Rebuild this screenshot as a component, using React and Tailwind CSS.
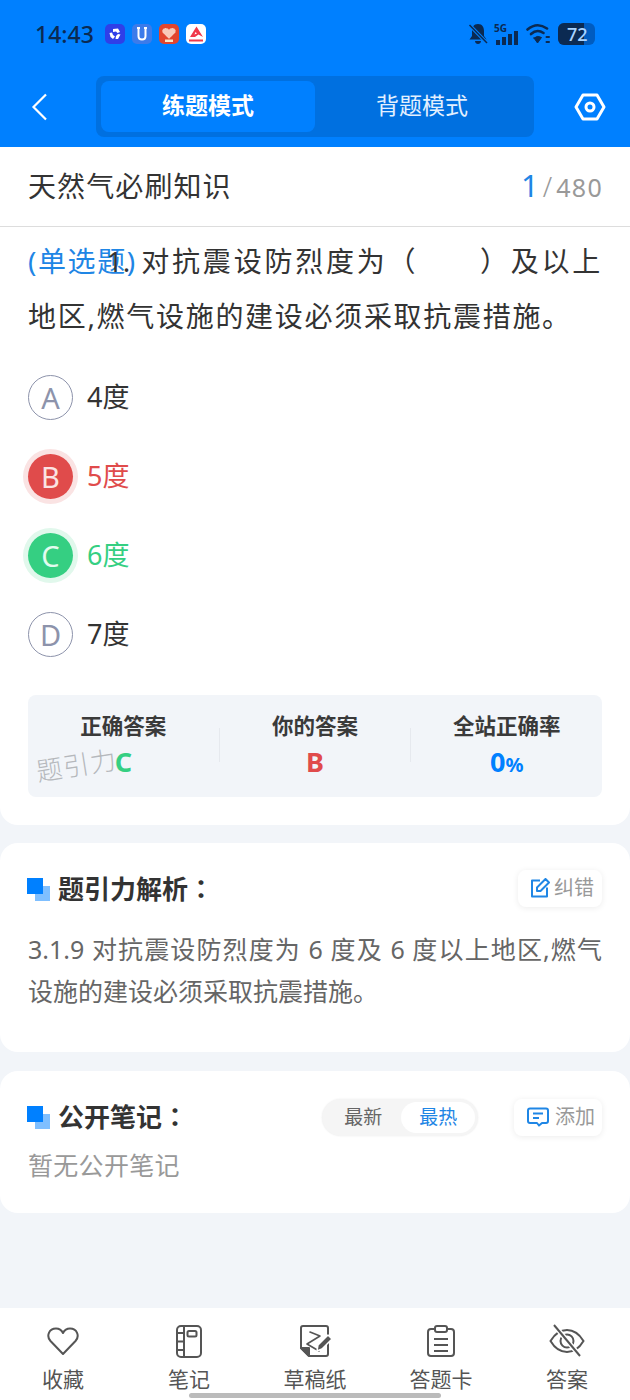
import React from 'react';

const font = { fontFamily: '"Noto Sans", "Noto Sans CJK SC", sans-serif' };

const Option = ({ letter, text, state }) => {
  const circle = {
    red: "bg-[#e04b4b] text-[#fbe3e3] ring-[5px] ring-[#fae3e3]",
    green: "bg-[#35cf82] text-[#e3fbef] ring-[5px] ring-[#e1f8ec]",
    none: "border border-[#8d93ab] text-[#8d93ab]",
  }[state];
  const color = { red: "text-[#e04b4b]", green: "text-[#35cf82]", none: "text-[#333333]" }[state];
  return (
    <div className="flex items-center h-[45px] mb-[34px]">
      <div className={`w-[45px] h-[45px] rounded-full flex items-center justify-center text-[29px] ${circle}`}>{letter}</div>
      <div className={`ml-[14px] text-[27px] ${color}`}>{text}</div>
    </div>
  );
};

const Stat = ({ label, children }) => (
  <div className="flex-1 flex flex-col items-center pt-[18px]">
    <div className="text-[21.5px] leading-[26px] font-bold text-[#3a3a3a]">{label}</div>
    <div className="h-[36px] mt-[5px] flex items-center font-bold text-[27px]">{children}</div>
  </div>
);

const SectionMark = () => (
  <div className="relative w-[23px] h-[23px] shrink-0 ml-[-1px]">
    <div className="absolute right-0 bottom-0 w-[15px] h-[15px] bg-[#7fbfff]" />
    <div className="absolute left-0 top-0 w-[16px] h-[16px] bg-[#0080ff]" />
  </div>
);

const Heart = () => (
  <svg width="34" height="34" viewBox="0 0 34 34" fill="none" stroke="#555" strokeWidth="2">
    <path d="M17 30 L4.5 17 C0 12 3 4.5 10 4.5 C13 4.5 15.5 6 17 9 C18.5 6 21 4.5 24 4.5 C31 4.5 34 12 29.500 17 Z" strokeLinejoin="round" />
  </svg>
);
const Notebook = () => (
  <svg width="34" height="34" viewBox="0 0 34 34" fill="none" stroke="#555" strokeWidth="2">
    <rect x="5" y="2" width="24" height="31" rx="4" />
    <path d="M12 2 V33 M5 9 H12 M5 17.500 H12 M5 26 H12" />
    <rect x="15.500" y="7" width="9" height="5.500" rx="1.500" />
  </svg>
);
const Draft = () => (
  <svg width="34" height="34" viewBox="0 0 34 34" fill="none" stroke="#555" strokeWidth="2" strokeLinejoin="round">
    <path d="M11 32 H28 Q30 32 30 30 V4 Q30 2 28 2 H5 Q3 2 3 4 V24 L11 32" />
    <path d="M3 24 H11 V32 Z" fill="#555" />
    <path d="M12 8 L22 12 L9 20 L21 27" strokeWidth="1.600" fill="none" strokeLinecap="round" />
    <path d="M19 27 L20 21 L30 11 L34 15 L24 25 Z" fill="#555" stroke="#fff" strokeWidth="1.500" />
  </svg>
);
const Clipboard = () => (
  <svg width="34" height="34" viewBox="0 0 34 34" fill="none" stroke="#555" strokeWidth="2">
    <path d="M10 5 H7 Q4 5 4 8 V29 Q4 32 7 32 H27 Q30 32 30 29 V8 Q30 5 27 5 H24" />
    <rect x="11" y="2" width="12" height="6" rx="2" />
    <path d="M10 15 H24 M10 21 H24 M10 27 H24" />
  </svg>
);
const EyeOff = () => (
  <svg width="36" height="34" viewBox="0 0 36 34" fill="none" stroke="#555" strokeWidth="2">
    <path d="M1.500 17 C6 9.500 11.500 6 18 6 C24.500 6 30 9.500 34.500 17 C30 24.500 24.500 28 18 28 C11.500 28 6 24.500 1.500 17 Z" />
    <circle cx="18" cy="17" r="6.500" />
    <path d="M5 1 L31 32" stroke="#fff" strokeWidth="5" />
    <path d="M5 1 L31 32" />
  </svg>
);

const NavItem = ({ icon, label }) => (
  <div className="flex flex-col items-center w-[90px]">
    <div className="h-[34px] flex items-center justify-center">{icon}</div>
    <div className="mt-[7px] text-[21px] leading-[28px] text-[#555555]">{label}</div>
  </div>
);

export default function App() {
  return (
    <div style={font} className="w-[630px] h-[1400px] relative overflow-hidden bg-[#f2f5f9] flex flex-col">
      <header className="bg-[#0080ff] h-[147px] shrink-0">
        <div className="h-[76px] pl-[35px] pr-[35px] pt-[22px] flex items-start justify-between">
          <div className="flex items-center h-[24px]">
            <span className="text-[23px] font-medium text-[#0b2a52] mr-[11px]">14:43</span>
            <div className="flex gap-[7px]">
              <svg width="20" height="20" viewBox="0 0 20 20">
                <rect width="20" height="20" rx="5" fill="#2f3fe8" />
                <path d="M8 5 L13 4.500 L15 8 L12.500 9 L11 7.500 L8 8 Z M4.500 9 L7 8.500 L8 11 L10 12.500 L8 15 L5.500 13 Z M11 12 L13 10 L15.500 10.500 L13 15 L10.500 15 Z" fill="#fff" />
              </svg>
              <svg width="20" height="20" viewBox="0 0 20 20">
                <rect width="20" height="20" rx="5" fill="#3c7bea" />
                <path d="M5 4 H8 M12 4 H15 M6.500 5 V12 Q6.500 15.500 10 15.500 Q13.500 15.500 13.500 12 V5" fill="none" stroke="#fff" strokeWidth="2" />
              </svg>
              <svg width="20" height="20" viewBox="0 0 20 20">
                <rect width="20" height="20" rx="5" fill="#e2452d" />
                <path d="M10 15 L3.500 8.500 C2 5 6.500 2 10 5.500 C13.500 2 18 5 16.500 8.500 Z" fill="#f8c9b8" stroke="#e2452d" strokeWidth="0.500" strokeDasharray="1 1" />
                <rect x="6" y="15.500" width="8" height="2.500" fill="#fbe4c4" />
              </svg>
              <svg width="20" height="20" viewBox="0 0 20 20">
                <rect width="20" height="20" rx="5" fill="#fff" />
                <path d="M10.500 2.500 L17 13 L12.500 10.500 L9 13 H4 Z" fill="#f0384a" />
                <path d="M9.500 8 L11 9.500 L8.500 10.500 Z" fill="#fff" />
                <rect x="3" y="15.500" width="14" height="2" fill="#f0384a" />
              </svg>
            </div>
          </div>
          <div className="flex items-center h-[24px] gap-[6px]">
            <svg width="20" height="22" viewBox="0 0 20 22" fill="#0b2a52">
              <path d="M10 1 C5.500 1 4 4.500 4 8 V13 L1.500 16.500 H18.500 L16 13 V8 C16 4.500 14.500 1 10 1 Z M7 18 H13 C13 22 7 22 7 18 Z" />
              <path d="M1.500 2 L19 20" stroke="#0080ff" strokeWidth="3.500" />
              <path d="M1.500 2 L19 20" stroke="#0b2a52" strokeWidth="1.500" />
            </svg>
            <div className="relative w-[26px] h-[22px]">
              <span className="absolute left-0 top-[0px] text-[10px] font-bold leading-[10px] text-[#0b2a52]">5G</span>
              <div className="absolute bottom-0 left-[2px] flex items-end gap-[2px]">
                <div className="w-[4px] h-[5px] bg-[#0b2a52]" />
                <div className="w-[4px] h-[8px] bg-[#0b2a52]" />
                <div className="w-[4px] h-[11px] bg-[#0b2a52]" />
                <div className="w-[4px] h-[14px] bg-[#0b2a52]" />
              </div>
            </div>
            <svg width="26" height="22" viewBox="0 0 26 22" fill="none" stroke="#0b2a52" strokeWidth="2.600" strokeLinecap="round">
              <path d="M1.500 6.500 Q11 -1.500 21 5.500" />
              <path d="M5 11 Q11 5.500 17.500 10" />
              <path d="M8 15 L11.500 20 L15.500 14.500 Q11.500 12 8 15 Z" fill="#0b2a52" strokeWidth="1" />
              <path d="M20.500 14 L23 14 M20.500 19 L23 19" strokeWidth="2" />
            </svg>
            <div className="relative w-[37px] h-[22px] rounded-[6px] bg-[#005cc0] overflow-hidden">
              <div className="absolute left-0 top-0 bottom-0 w-[26px] bg-[#0b2a52]" />
              <div className="absolute inset-0 pl-[9px] text-[18px] leading-[22px] font-medium text-[#a9d4ff]">72</div>
            </div>
          </div>
        </div>
        <div className="flex items-center h-[61px]">
          <div className="w-[96px] pl-[31px]">
            <svg width="18" height="28" viewBox="0 0 18 28" fill="none" stroke="#fff" strokeWidth="2.200">
              <path d="M15 1.500 L2.500 14 L15 26.500" />
            </svg>
          </div>
          <div className="w-[438px] h-[61px] bg-[#0070e0] rounded-[8px] p-[5px] flex">
            <div className="w-[214px] pb-[2px] bg-[#0080ff] rounded-[8px] flex items-center justify-center text-[23px] font-bold text-white">练题模式</div>
            <div className="flex-1 pb-[2px] flex items-center justify-center text-[23px] text-[#e3f0ff]">背题模式</div>
          </div>
          <div className="flex-1 flex justify-center pl-[16px] pt-[1px]">
            <svg width="32" height="28" viewBox="0 0 32 28" fill="none" stroke="#fff" strokeWidth="3">
              <path d="M9 2 H23 L30 14 L23 26 H9 L2 14 Z" strokeLinejoin="round" />
              <circle cx="16" cy="14" r="4" />
            </svg>
          </div>
        </div>
      </header>

      <section className="bg-white rounded-b-[18px] h-[678px] shrink-0">
        <div className="h-[80px] pl-[28px] pr-[27px] pb-[2px] flex items-center justify-between border-b border-[#dddddd]">
          <div className="text-[28px] tracking-[1.100px] text-[#333333]">天然气必刷知识</div>
          <div className="flex items-baseline text-[#999999]">
            <span className="text-[31px] text-[#1f86e5] mr-[4px]">1</span>
            <span className="text-[27px] mr-[4px] font-light">/</span>
            <span className="text-[25px] tracking-[1.300px]">480</span>
          </div>
        </div>
        <div className="px-[28px] pt-[7px] text-[28px] leading-[55px] tracking-[1.700px] text-[#333333] text-justify">
          <span className="text-[#1f86e5] tracking-[0.500px]">(单选题)</span>
          <span className="ml-[-29px] mr-[10px] tracking-normal">1.</span>
          对抗震设防烈度为（　　）及以上地区,燃气设施的建设必须采取抗震措施。
        </div>
        <div className="px-[28px] pt-[31px]">
          <Option letter="A" text="4度" state="none" />
          <Option letter="B" text="5度" state="red" />
          <Option letter="C" text="6度" state="green" />
          <Option letter="D" text="7度" state="none" />
        </div>
        <div className="relative mx-[28px] mt-[38px] h-[102px] bg-[#f2f5f9] rounded-[8px] flex">
          <Stat label="正确答案"><span className="text-[#35cf82]">C</span></Stat>
          <div className="w-px h-[34px] bg-[#e6e9ee] mt-[33px]" />
          <Stat label="你的答案"><span className="text-[#e04b4b]">B</span></Stat>
          <div className="w-px h-[34px] bg-[#e6e9ee] mt-[33px]" />
          <Stat label="全站正确率">
            <span className="text-[#0080ff]">0<span className="text-[20px]">%</span></span>
          </Stat>
          <div className="absolute left-[8px] top-[54px] text-[26px] tracking-[1px] font-light text-[#b5b8bc] -rotate-[9deg] leading-[32px]">题引力</div>
        </div>
      </section>

      <section className="bg-white rounded-[18px] mt-[18px] h-[209px] shrink-0 px-[28px] pt-[26px]">
        <div className="flex items-center justify-between h-[40px]">
          <div className="flex items-center">
            <SectionMark />
            <div className="ml-[8px] pb-[2px] text-[26px] font-bold text-[#333333]">
              题引力解析<span className="font-['Noto_Sans_CJK_TC']">：</span>
            </div>
          </div>
          <div className="flex items-center h-[37px] mb-[2px] pl-[12px] pr-[8px] rounded-[8px] bg-white shadow-[0_1px_6px_rgba(0,0,0,0.08)]">
            <svg width="20" height="20" viewBox="0 0 20 20" fill="none" stroke="#1f86e5" strokeWidth="2">
              <path d="M10 2.500 H2 V18.500 H17 V9.500" strokeLinejoin="round" />
              <path d="M15.500 1 L19 4.500 L10.500 13 H7 V9.500 Z" strokeLinejoin="round" />
            </svg>
            <span className="ml-[4px] text-[20px] text-[#999999]">纠错</span>
          </div>
        </div>
        <div className="mt-[19px] text-[25px] leading-[42px] text-[#666666] text-justify">
          3.1.9 对抗震设防烈度为 6 度及 6 度以上地区,燃气设施的建设必须采取抗震措施。
        </div>
      </section>

      <section className="bg-white rounded-[18px] mt-[19px] h-[142px] shrink-0 px-[28px] pt-[27px]">
        <div className="flex items-center h-[38px]">
          <SectionMark />
          <div className="ml-[8px] pb-[2px] text-[26px] font-bold text-[#333333]">
            公开笔记<span className="font-['Noto_Sans_CJK_TC']">：</span>
          </div>
          <div className="ml-auto flex items-center h-[37px] w-[156px] rounded-full bg-[#f5f5f5] p-[3px] shadow-[0_0_2px_rgba(0,0,0,0.08)]">
            <div className="w-[78px] text-center text-[19px] text-[#666666]">最新</div>
            <div className="w-[75px] h-[31px] rounded-full bg-white flex items-center justify-center text-[19px] text-[#1f86e5]">最热</div>
          </div>
          <div className="ml-[36px] flex items-center h-[37px] pl-[13px] pr-[7px] rounded-[8px] bg-white shadow-[0_1px_6px_rgba(0,0,0,0.08)]">
            <svg width="22" height="20" viewBox="0 0 22 20" fill="none" stroke="#1f86e5" strokeWidth="2">
              <path d="M3 1.500 H19 Q21 1.500 21 3.500 V14 Q21 16 19 16 H15 L12 18.500 L10 16 H3 Q1 16 1 14 V3.500 Q1 1.500 3 1.500 Z" strokeLinejoin="round" />
              <path d="M6 6.500 H16 M6 11 H12" />
            </svg>
            <span className="ml-[6px] text-[20px] text-[#999999]">添加</span>
          </div>
        </div>
        <div className="mt-[12px] text-[25px] leading-[34px] tracking-[0.300px] text-[#999999]">暂无公开笔记</div>
      </section>

      <nav className="mt-auto h-[92px] shrink-0 bg-white px-[18px] pt-[16px] flex justify-between">
        <NavItem icon={<Heart />} label="收藏" />
        <NavItem icon={<Notebook />} label="笔记" />
        <NavItem icon={<Draft />} label="草稿纸" />
        <NavItem icon={<Clipboard />} label="答题卡" />
        <NavItem icon={<EyeOff />} label="答案" />
      </nav>
      <div className="absolute left-[189px] bottom-[2px] w-[252px] h-[5px] rounded-full bg-[#bbbbbb]" />
    </div>
  );
}
